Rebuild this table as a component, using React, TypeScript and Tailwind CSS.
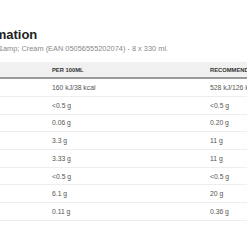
const rows = [
  ["160 kJ/38 kcal", "528 kJ/126 kcal"],
  ["<0.5 g", "<0.5 g"],
  ["0.06 g", "0.20 g"],
  ["3.3 g", "11 g"],
  ["3.33 g", "11 g"],
  ["<0.5 g", "<0.5 g"],
  ["6.1 g", "20 g"],
  ["0.11 g", "0.36 g"],
];

export default function App() {
  return (
    <div className="h-[247px] w-[247px] overflow-hidden bg-white font-['Liberation_Sans',Arial,sans-serif]">
      <div className="pt-[27.7px]">
        <h2 className="-ml-[92px] whitespace-nowrap text-[13px] font-bold leading-[13px] text-[#222]">
          Nutrition Information
        </h2>
        <p className="-ml-[2px] mt-[4px] whitespace-nowrap text-[7.4px] leading-[7.4px] text-[#888]">
          &amp;amp; Cream (EAN 05056555202074) - 8 x 330 ml.
        </p>
      </div>

      <div className="mt-[10.4px] w-[320px] whitespace-nowrap">
        <div className="grid h-[16.8px] grid-cols-[52px_158px_1fr] border-b-2 border-[#999] bg-[#f0f0f0] pt-[6px] text-[5.8px] font-bold leading-[5.8px] text-[#333]">
          <span />
          <span>PER 100ML</span>
          <span>RECOMMENDED SERVING</span>
        </div>
        {rows.map(([per100, serving], i) => (
          <div
            key={i}
            className="grid h-[17.7px] grid-cols-[52px_158px_1fr] border-b border-[#eee] pt-[5.8px] text-[6.8px] leading-[6.8px] text-[#555]"
          >
            <span />
            <span>{per100}</span>
            <span>{serving}</span>
          </div>
        ))}
      </div>
    </div>
  );
}
